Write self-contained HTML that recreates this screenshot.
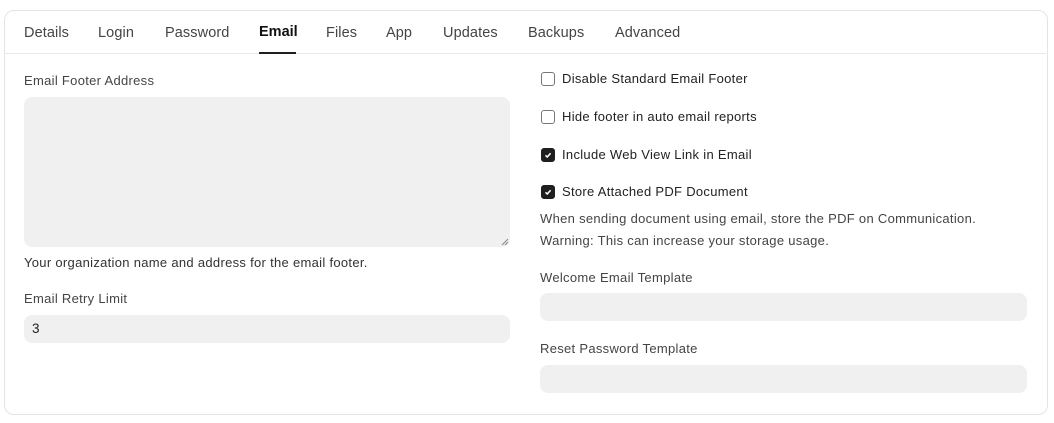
<!DOCTYPE html>
<html><head><style>
body{margin:0;width:1054px;height:423px;background:#fff;font-family:"Liberation Sans",sans-serif;color:#1f1f1f;position:relative;overflow:hidden}
.a{position:absolute;white-space:nowrap}
.card{position:absolute;left:4px;top:10px;width:1042px;height:403px;border:1px solid #e4e4e4;border-radius:10px}
.tab{position:absolute;top:25px;font-size:14.5px;color:#444;letter-spacing:0.1px}
.lbl{font-size:13px;color:#444;letter-spacing:0.3px}
.inp{position:absolute;background:#f0f0f0;border-radius:8px}
.cb{position:absolute;left:541px;width:12px;height:12px;border:1px solid #777;border-radius:3px;background:#fff}
.cb.on{background:#1f1f1f;border-color:#1f1f1f}
.cl{position:absolute;left:562px;font-size:13px;color:#222;letter-spacing:0.3px}
</style></head><body>
<div class="card"></div>
<div class="a" style="left:5px;top:53px;width:1041px;height:1px;background:#e8e8e8"></div>
<span class="tab" style="left:24px">Details</span>
<span class="tab" style="left:98px">Login</span>
<span class="tab" style="left:165px">Password</span>
<span class="tab" style="left:259px;color:#111;font-weight:bold;top:24px;letter-spacing:0">Email</span>
<span class="tab" style="left:326px">Files</span>
<span class="tab" style="left:386px">App</span>
<span class="tab" style="left:443px">Updates</span>
<span class="tab" style="left:528px">Backups</span>
<span class="tab" style="left:615px">Advanced</span>
<div class="a" style="left:259px;top:52px;width:37px;height:1.5px;background:#1f1f1f"></div>

<span class="a lbl" style="left:24px;top:73px">Email Footer Address</span>
<div class="inp" style="left:24px;top:97px;width:486px;height:150px"></div>
<svg class="a" style="left:501px;top:238px" width="8" height="8"><path d="M1 7L7 1M4 7L7 4" stroke="#888" stroke-width="1"/></svg>
<span class="a lbl" style="left:24px;top:255px;color:#333">Your organization name and address for the email footer.</span>
<span class="a lbl" style="left:24px;top:291px">Email Retry Limit</span>
<div class="inp" style="left:24px;top:315px;width:486px;height:28px"></div>
<span class="a" style="left:32px;top:321px;font-size:13.5px">3</span>

<div class="cb" style="top:72px"></div>
<div class="cb" style="top:110px"></div>
<div class="cb on" style="top:148px"><svg width="12" height="12" style="display:block"><path d="M3.5 6.3L5.2 8L8.6 4.2" stroke="#fff" stroke-width="1.5" fill="none"/></svg></div>
<div class="cb on" style="top:185px"><svg width="12" height="12" style="display:block"><path d="M3.5 6.3L5.2 8L8.6 4.2" stroke="#fff" stroke-width="1.5" fill="none"/></svg></div>
<span class="cl" style="top:71px">Disable Standard Email Footer</span>
<span class="cl" style="top:109px">Hide footer in auto email reports</span>
<span class="cl" style="top:147px">Include Web View Link in Email</span>
<span class="cl" style="top:184px">Store Attached PDF Document</span>
<span class="a lbl" style="left:540px;top:211px;color:#444">When sending document using email, store the PDF on Communication.</span>
<span class="a lbl" style="left:540px;top:233px;color:#444">Warning: This can increase your storage usage.</span>
<span class="a lbl" style="left:540px;top:270px">Welcome Email Template</span>
<div class="inp" style="left:540px;top:293px;width:487px;height:28px"></div>
<span class="a lbl" style="left:540px;top:341px">Reset Password Template</span>
<div class="inp" style="left:540px;top:365px;width:487px;height:28px"></div>
</body></html>
